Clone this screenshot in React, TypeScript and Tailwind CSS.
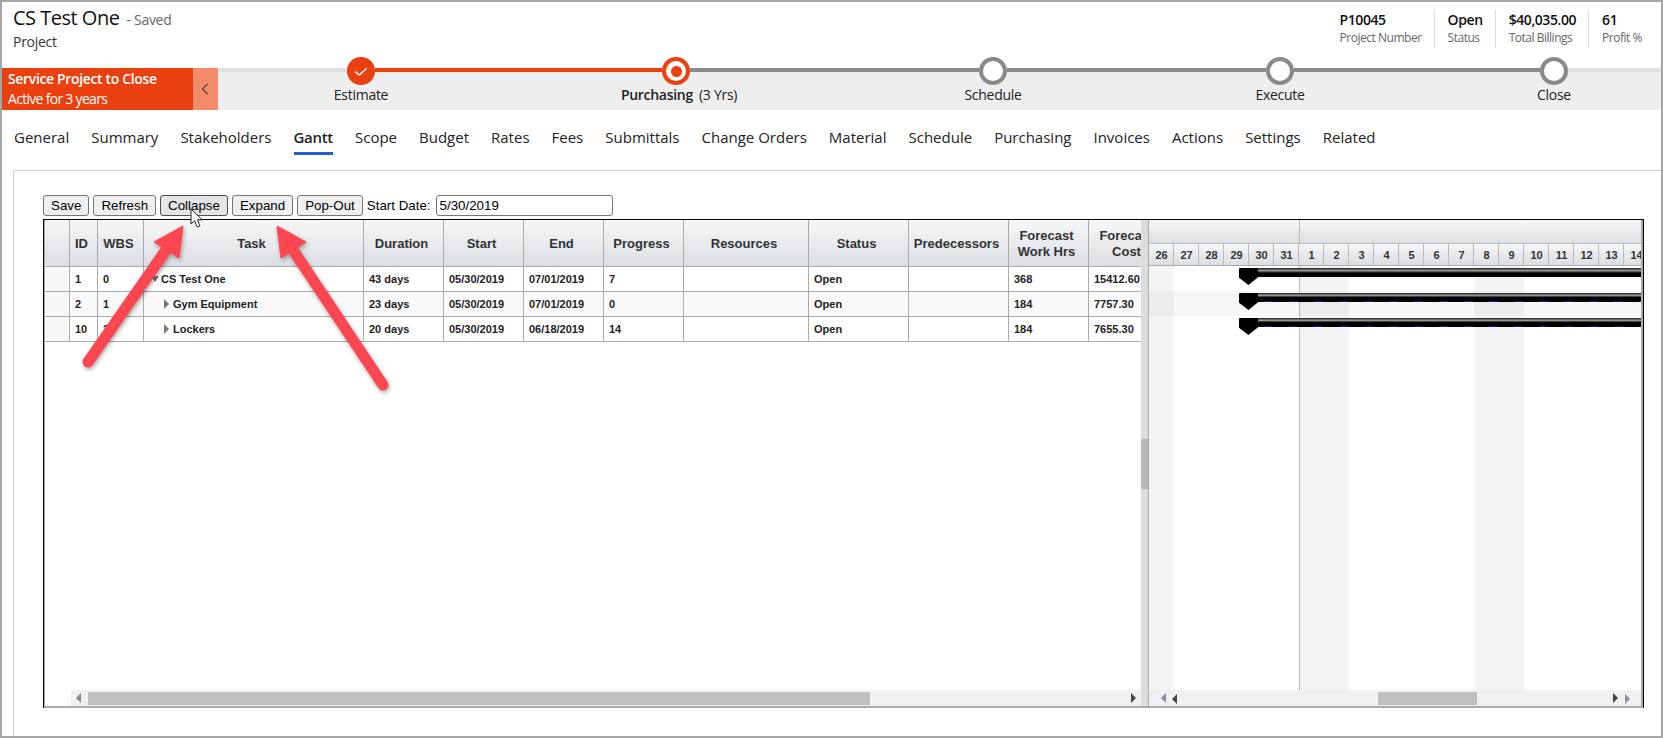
import { ChevronLeft } from "lucide-react";

const tabs = ["General", "Summary", "Stakeholders", "Gantt", "Scope", "Budget", "Rates", "Fees", "Submittals", "Change Orders", "Material", "Schedule", "Purchasing", "Invoices", "Actions", "Settings", "Related"];

const stats = [
  { value: "P10045", label: "Project Number" },
  { value: "Open", label: "Status" },
  { value: "$40,035.00", label: "Total Billings" },
  { value: "61", label: "Profit %" },
];

const rows = [
  { id: "1", wbs: "0", task: "CS Test One", level: 0, duration: "43 days", start: "05/30/2019", end: "07/01/2019", progress: "7", hrs: "368", cost: "15412.60" },
  { id: "2", wbs: "1", task: "Gym Equipment", level: 1, duration: "23 days", start: "05/30/2019", end: "07/01/2019", progress: "0", hrs: "184", cost: "7757.30" },
  { id: "10", wbs: "2", task: "Lockers", level: 1, duration: "20 days", start: "05/30/2019", end: "06/18/2019", progress: "14", hrs: "184", cost: "7655.30" },
];

const days = [26, 27, 28, 29, 30, 31, 1, 2, 3, 4, 5, 6, 7, 8, 9, 10, 11, 12, 13, 14];
const weekend = [26, 1, 2, 8, 9];

const headGradient = "bg-gradient-to-b from-[#f6f7f8] to-[#dbdee2]";
const th = `border-r border-b border-[#aaaaaa] ${headGradient} text-[13px] font-bold text-[#333333] leading-[16px] text-center align-middle pt-[2px] pr-[4px]`;
const td = "border-r border-b border-[#aaaaaa] px-[5px] py-0 text-[11px] font-bold text-[#222222] whitespace-nowrap overflow-hidden";

function Tri({ dir, fill }: { dir: "left" | "right" | "down"; fill: string }) {
  if (dir === "down") return <svg width="8" height="6" viewBox="0 0 8 6" className="inline-block shrink-0"><path d="M0 0H8L4 6Z" fill={fill} /></svg>;
  if (dir === "right") return <svg width="5" height="10" viewBox="0 0 5 10" className="inline-block shrink-0"><path d="M0 0L5 5L0 10Z" fill={fill} /></svg>;
  return <svg width="5" height="10" viewBox="0 0 5 10" className="inline-block shrink-0"><path d="M5 0L0 5L5 10Z" fill={fill} /></svg>;
}

function Step({ label, state, extra }: { label: string; state: "done" | "active" | "todo"; extra?: string }) {
  return (
    <div className="w-7 shrink-0 flex flex-col items-center">
      {state === "done" && (
        <div className="w-7 h-7 shrink-0 rounded-full bg-[#ea3f0f]">
          <svg width="28" height="28" viewBox="0 0 28 28"><path d="M8 14.7L12.3 18L19.7 11.3" fill="none" stroke="#ffffff" strokeWidth="1.5" /></svg>
        </div>
      )}
      {state === "active" && (
        <div className="w-7 h-7 shrink-0 rounded-full border-4 border-[#ea3f0f] bg-white flex items-center justify-center">
          <div className="w-[11px] h-[11px] rounded-full bg-[#ea3f0f]" />
        </div>
      )}
      {state === "todo" && <div className="w-7 h-7 shrink-0 rounded-full border-4 border-[#8a8a8a] bg-white" />}
      <div className={`whitespace-nowrap text-[14px] leading-5 tracking-[-0.02em] text-[#222222] ${state === "active" ? "font-semibold pl-[6px]" : ""}`}>
        {label}
        {extra && <span className="font-normal ml-[6px]">{extra}</span>}
      </div>
    </div>
  );
}

function Bar({ wave, height }: { wave: boolean; height: string }) {
  return (
    <div className={`relative ml-[90px] ${height} bg-[linear-gradient(180deg,#1a1a1a_0%,#9a9a9a_30%,#000000_55%,#000000_100%)]`}>
      {wave && <div className="absolute left-0 right-0 -bottom-px h-px bg-[repeating-linear-gradient(90deg,#1c1c9a_0_9px,#000000_9px_25px)]" />}
      <div className="absolute left-0 top-0 w-[19px] h-[17px] bg-black [clip-path:polygon(8%_0,100%_0,100%_55%,50%_100%,0_58%,0_12%)]" />
    </div>
  );
}

function Btn({ label, active }: { label: string; active?: boolean }) {
  return (
    <button className={`h-[21px] px-[7px] rounded-[3px] border text-[13.33px] leading-none text-black ${active ? "bg-[#e5e5e5] border-[#4f4f4f]" : "bg-[#efefef] border-[#767676]"}`}>
      {label}
    </button>
  );
}

export default function App() {
  return (
    <div className="relative w-[1663px] h-[738px] overflow-hidden border-2 border-[#a6a6a6] bg-white font-['Open_Sans',sans-serif] flex flex-col">
      {/* Title + stats */}
      <div className="h-[66px] shrink-0 flex justify-between pl-[11px] pr-[7px]">
        <div>
          <div className="flex items-baseline h-[32px] pt-[1px]">
            <span className="text-[20px] leading-[30px] font-medium tracking-[-0.025em] text-[#111111]">CS Test One</span>
            <span className="ml-[7px] text-[14px] tracking-[-0.02em] text-[#666666]">- Saved</span>
          </div>
          <div className="mt-[-2px] text-[14px] leading-5 font-medium tracking-[-0.02em] text-[#333333]">Project</div>
        </div>
        <div className="flex items-start pt-[8px]">
          {stats.map((s, i) => (
            <div key={s.label} className={`h-[38px] pl-[13px] pr-[12px] ${i < 3 ? "border-r border-[#dddddd]" : ""}`}>
              <div className="text-[14px] leading-5 font-semibold tracking-[-0.03em] text-[#111111] whitespace-nowrap">{s.value}</div>
              <div className="text-[12px] leading-4 tracking-[-0.04em] text-[#666666] whitespace-nowrap">{s.label}</div>
            </div>
          ))}
        </div>
      </div>

      {/* Business process bar */}
      <div className="h-[42px] shrink-0 flex bg-[#eeeeee]">
        <div className="w-[191px] bg-[#ea3f0f] pl-[6px] pt-[1px] text-white">
          <div className="text-[14px] leading-5 font-semibold tracking-[-0.025em]">Service Project to Close</div>
          <div className="text-[14px] leading-5 tracking-[-0.05em]">Active for 3 years</div>
        </div>
        <div className="w-[25px] bg-[#f48c6c] flex items-center justify-center text-[#222222]">
          <ChevronLeft size={20} strokeWidth={1.25} className="-ml-px" />
        </div>
        <div className="flex-1 flex items-start mt-[-11px]">
          <div className="w-[129px] h-1 mt-[11px] bg-[#e0e0e0]" />
          <Step label="Estimate" state="done" />
          <div className="w-[287px] h-1 mt-[11px] bg-[#ea3f0f]" />
          <Step label="Purchasing" extra="(3 Yrs)" state="active" />
          <div className="w-[289px] h-1 mt-[11px] bg-[#8a8a8a]" />
          <Step label="Schedule" state="todo" />
          <div className="w-[259px] h-1 mt-[11px] bg-[#8a8a8a]" />
          <Step label="Execute" state="todo" />
          <div className="w-[246px] h-1 mt-[11px] bg-[#8a8a8a]" />
          <Step label="Close" state="todo" />
          <div className="flex-1 h-1 mt-[11px] bg-[#e0e0e0]" />
        </div>
      </div>

      {/* Tabs */}
      <div className="h-[60px] shrink-0 flex gap-[22px] pl-[12px] pt-[16px] text-[15px] text-[#222222]">
        {tabs.map((t) => (
          <div key={t} className={`leading-[22px] whitespace-nowrap ${t === "Gantt" ? "h-[29px] font-semibold tracking-[-0.02em] border-b-[3px] border-[#1f5fd0]" : "h-[26px]"}`}>
            {t}
          </div>
        ))}
      </div>

      {/* Tab panel */}
      <div className="flex-1 ml-[11px] border-t border-l border-[#cccccc] pl-[29px] pr-[17px] pt-[24px] font-['Liberation_Sans',Arial,sans-serif]">
        <div className="flex items-center gap-[4px] h-[21px]">
          <Btn label="Save" />
          <Btn label="Refresh" />
          <Btn label="Collapse" active />
          <Btn label="Expand" />
          <Btn label="Pop-Out" />
          <span className="text-[13.33px] text-black whitespace-nowrap">Start Date:</span>
          <input readOnly value="5/30/2019" className="ml-px w-[177px] h-[21px] px-[3px] rounded-[3px] border border-[#767676] text-[13.33px] text-black bg-white" />
        </div>

        {/* Gantt control */}
        <div className="mt-[3px] h-[489px] border-t border-x border-black">
          <div className="h-full flex border-x-2 border-b-2 border-[#aaaaaa] border-l-[1px]">
            {/* Grid pane */}
            <div className="w-[1096px] shrink-0 flex flex-col overflow-hidden">
              <div className="flex-1 overflow-hidden">
                <table className="w-[1124px] table-fixed border-separate border-spacing-0">
                  <colgroup>
                    <col className="w-[25px]" /><col className="w-[28px]" /><col className="w-[46px]" /><col className="w-[220px]" />
                    <col className="w-[80px]" /><col className="w-[80px]" /><col className="w-[80px]" /><col className="w-[80px]" />
                    <col className="w-[125px]" /><col className="w-[100px]" /><col className="w-[100px]" /><col className="w-[80px]" /><col className="w-[80px]" />
                  </colgroup>
                  <thead>
                    <tr className="h-[47px]">
                      <th className={th}></th>
                      {["ID", "WBS", "Task", "Duration", "Start", "End", "Progress", "Resources", "Status", "Predecessors"].map((h) => (
                        <th key={h} className={th}>{h}</th>
                      ))}
                      <th className={th}>Forecast<br />Work Hrs</th>
                      <th className={th}>Forecast<br />Cost</th>
                    </tr>
                  </thead>
                  <tbody>
                    {rows.map((r, i) => (
                      <tr key={r.id} className={`h-[25px] ${i === 1 ? "bg-[#f9f9f9]" : "bg-white"}`}>
                        <td className="border-r border-b border-[#aaaaaa] bg-[#f7f7f7]"></td>
                        <td className={td}>{r.id}</td>
                        <td className={td}>{r.wbs}</td>
                        <td className={td}>
                          {r.level === 0 ? (
                            <span className="flex items-center gap-[2px] pl-[2px]"><Tri dir="down" fill="#777777" />{r.task}</span>
                          ) : (
                            <span className="flex items-center gap-[4px] pl-[15px]"><Tri dir="right" fill="#777777" />{r.task}</span>
                          )}
                        </td>
                        <td className={td}>{r.duration}</td>
                        <td className={td}>{r.start}</td>
                        <td className={td}>{r.end}</td>
                        <td className={td}>{r.progress}</td>
                        <td className={td}></td>
                        <td className={td}>Open</td>
                        <td className={td}></td>
                        <td className={td}>{r.hrs}</td>
                        <td className={td}>{r.cost}</td>
                      </tr>
                    ))}
                  </tbody>
                </table>
              </div>
              <div className="h-[16px] shrink-0 ml-[26px] bg-[#f0f0f0] flex items-center pl-[5px] pr-[5px]">
                <Tri dir="left" fill="#888888" />
                <div className="ml-[7px] w-[782px] h-[13px] bg-[#bfbfbf]" />
                <div className="flex-1" />
                <Tri dir="right" fill="#444444" />
              </div>
            </div>

            {/* Splitter */}
            <div className="w-[8px] shrink-0 bg-[#dcdcdc] border-r border-[#aaaaaa] pt-[219px]">
              <div className="h-[50px] bg-[#b8b8b8]" />
            </div>

            {/* Chart pane */}
            <div className="flex-1 min-w-0 overflow-hidden flex flex-col">
              <div className={`h-[23px] shrink-0 flex ${headGradient}`}>
                <div className="w-[151px] h-full border-r border-[#bbbbbb]" />
              </div>
              <div className={`h-[23px] shrink-0 flex border-b border-[#aaaaaa] ${headGradient}`}>
                {days.map((d, i) => (
                  <div key={i} className="w-[25px] shrink-0 pl-px border-r border-t border-[#bbbbbb] text-center text-[11px] leading-[22px] font-bold text-[#333333]">
                    {d}
                  </div>
                ))}
              </div>
              <div className="relative flex-1">
                {/* Weekend shading */}
                <div className="absolute inset-0 flex">
                  {days.map((d, i) => (
                    <div key={i} className={`w-[25px] shrink-0 ${weekend.includes(d) ? "bg-[#f4f4f4]" : ""} ${i === 6 ? "border-l border-[#bbbbbb]" : ""}`} />
                  ))}
                </div>
                <div className="relative">
                  <div className="h-[25px] pt-[2px]"><Bar wave={false} height="h-[9px]" /></div>
                  <div className="h-[25px] pt-[2px] bg-black/[0.03]"><Bar wave height="h-[8px]" /></div>
                  <div className="h-[25px] pt-[2px]"><Bar wave height="h-[8px]" /></div>
                </div>
              </div>
              <div className="h-[16px] shrink-0 bg-[#f0f0f0] flex items-center pl-[12px] pr-[11px]">
                <Tri dir="left" fill="#8a8fa8" />
                <div className="ml-[6px]"><Tri dir="left" fill="#444444" /></div>
                <div className="ml-[201px] w-[99px] h-[13px] bg-[#bfbfbf]" />
                <div className="flex-1" />
                <Tri dir="right" fill="#444444" />
                <div className="ml-[7px]"><Tri dir="right" fill="#8a8fa8" /></div>
              </div>
            </div>
          </div>
        </div>
      </div>

      {/* Annotation arrows and cursor pasted on the screenshot */}
      <svg width="1663" height="738" viewBox="0 0 1663 738" className="absolute -left-[2px] -top-[2px] pointer-events-none drop-shadow-[1px_2px_2px_rgba(0,0,0,0.35)]">
        <path d="M166 250L88 362" stroke="#fc4650" strokeWidth="11" strokeLinecap="round" />
        <path d="M183 226L154 242L179 258Z" fill="#fc4650" stroke="#fc4650" strokeWidth="1" />
        <path d="M293 250L383 385" stroke="#fc4650" strokeWidth="11" strokeLinecap="round" />
        <path d="M277 226L306 242L281 258Z" fill="#fc4650" stroke="#fc4650" strokeWidth="1" />
      </svg>
      <svg width="16" height="22" viewBox="0 0 16 22" className="absolute left-[188px] top-[206px] pointer-events-none">
        <path d="M1 1V16L4.6 12.8L7.2 19L10 17.8L7.4 11.8H12.2Z" fill="#ffffff" stroke="#222222" strokeWidth="1" />
      </svg>
    </div>
  );
}
